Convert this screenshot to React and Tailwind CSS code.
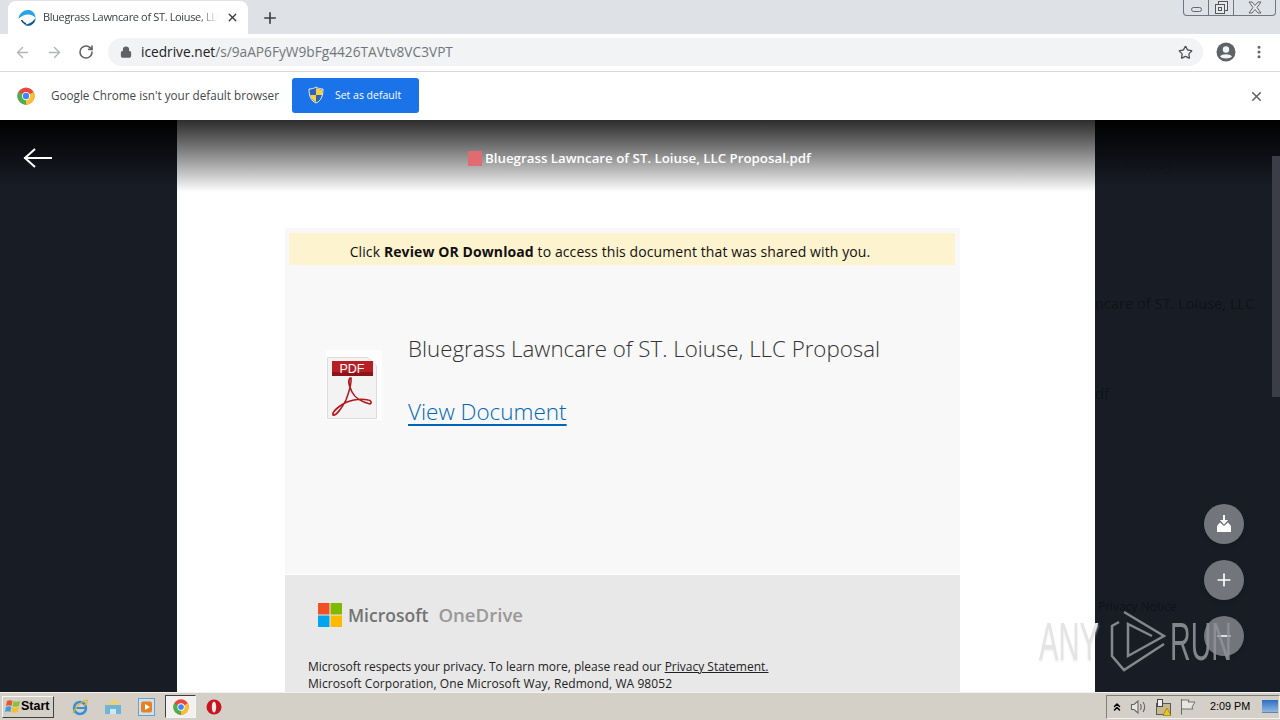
import React from "react";
import { ArrowLeft, ArrowRight, RotateCw, Lock, Star, MoreVertical, X, Plus, Minus, ChevronsUp } from "lucide-react";

const ChromeLogo = ({ size = 18 }) => (
  <svg width={size} height={size} viewBox="0 0 48 48">
    <circle cx="24" cy="24" r="23" fill="#e8453c" />
    <path d="M24 24 L44 13 A23 23 0 0 1 24 47 Z" fill="#fbc02d" />
    <path d="M24 24 L24 47 A23 23 0 0 1 4 13 Z" fill="#4caf50" />
    <circle cx="24" cy="24" r="11" fill="#fff" />
    <circle cx="24" cy="24" r="8.5" fill="#4285f4" />
  </svg>
);

const TabFavicon = () => (
  <svg width="18" height="18" viewBox="0 0 18 18" fill="none">
    <path d="M0.5 10 C1 4 6 0.5 11 1 C15 1.500 17.500 5 17.500 9 C15.500 6.500 12.500 5 9 5.500 C5.500 6 3 7.500 0.500 10Z" fill="#29a4e6" />
    <path d="M17.500 9 C17.800 13 14.500 17 9.500 16.800 C8 16.700 7 16.200 6 15.500 C10 15.800 14.500 13.500 17.500 9Z" fill="#0f5c9e" />
    <path d="M3.500 11 C4.500 13 6 14.500 8 15" stroke="#0d3f70" strokeWidth="1.600" />
  </svg>
);

const Shield = () => (
  <svg width="16" height="18" viewBox="0 0 16 18">
    <path d="M8 1 C10 2.500 13 3 15 3 C15 10 13 15 8 17 C3 15 1 10 1 3 C3 3 6 2.500 8 1Z" fill="#2f62b8" stroke="#e8eef8" strokeWidth="1" />
    <path d="M8 2 L8 9 L14 9 C14.300 7.500 14.400 5.500 14.400 3.600 C12 3.400 10 3 8 2Z" fill="#f7d23e" />
    <path d="M8 9 L2.200 9 C3 12.500 5 15 8 16.200Z" fill="#f7d23e" />
  </svg>
);

const PdfIcon = () => (
  <svg width="56" height="70" viewBox="0 0 56 70">
    <rect x="0" y="0" width="56" height="70" fill="#fdfdfd" />
    <path d="M1.500 7.500 H42 L50.500 16 V68.500 H1.500Z" fill="#f3f3f3" stroke="#dcdcdc" />
    <path d="M6 11 H47 V26 H6Z" fill="#b81f24" />
    <path d="M6 22 H47 V26 H6Z" fill="#8f1418" />
    <text x="26" y="23" textAnchor="middle" fontSize="12.500" fill="#fff" fontFamily="'Liberation Sans', sans-serif">PDF</text>
    <path d="M24 28 C22 30 23 36 26 42 C29 48 36 52 44 54 C46 53 45 50 42 50 C34 48 22 50 14 56 C10 59 6 62 7 65 C10 66 16 58 20 50 C23 42 26 34 25 28Z" fill="none" stroke="#b3181d" strokeWidth="1.600" />
  </svg>
);

const MsLogo = () => (
  <svg width="24" height="24" viewBox="0 0 24 24">
    <rect x="0" y="0" width="11.500" height="11.500" fill="#f25022" />
    <rect x="12.500" y="0" width="11.500" height="11.500" fill="#7fba00" />
    <rect x="0" y="12.500" width="11.500" height="11.500" fill="#00a4ef" />
    <rect x="12.500" y="12.500" width="11.500" height="11.500" fill="#ffb900" />
  </svg>
);

const StartOrb = () => (
  <svg width="18" height="18" viewBox="0 0 18 18">
    <path d="M3 3 C5 2 7 2 8.500 3 L7.500 8 C6 7 4 7 2 8Z" fill="#e8562a" />
    <path d="M9.500 3 C11 4 13 4 16 3 L15 8 C12.500 9 10 9 8.500 8Z" fill="#8cbf3f" />
    <path d="M2 9 C4 8 6 8 7.300 9 L6.300 14 C5 13 3 13 1 14Z" fill="#3f9be0" />
    <path d="M8.300 9 C10 10 12 10 14.800 9 L13.800 14 C11 15 9 15 7.300 14Z" fill="#f5c02c" />
  </svg>
);

const IeIcon = () => (
  <svg width="18" height="18" viewBox="0 0 18 18" fill="none">
    <circle cx="9" cy="10" r="6" stroke="#3b8fd6" strokeWidth="2.500" />
    <path d="M3 10 H15" stroke="#3b8fd6" strokeWidth="2" />
    <path d="M2 15 C5 8 11 3 16 2 C17 5 14 7 13 8" stroke="#e6b422" strokeWidth="1.200" />
  </svg>
);

const FolderIcon = () => (
  <svg width="18" height="18" viewBox="0 0 18 18">
    <path d="M2 5 H7 L8 2 H15 V7 H2Z" fill="#e9d17c" />
    <path d="M1 7 H17 V16 H12 V11 H6 V16 H1Z" fill="#6fb5d8" />
    <rect x="6" y="11" width="6" height="5" fill="#d3e5ee" />
  </svg>
);

const MediaIcon = () => (
  <svg width="17" height="18" viewBox="0 0 17 18">
    <rect x="0.500" y="0.500" width="16" height="17" fill="#cfe0ef" stroke="#6f9fc8" />
    <rect x="3" y="3.500" width="11" height="11" rx="2" fill="#e8811f" />
    <path d="M7 6 L12 9 L7 12Z" fill="#fff" />
  </svg>
);

const OperaIcon = () => (
  <svg width="16" height="16" viewBox="0 0 16 16">
    <circle cx="8" cy="8" r="7.500" fill="#c8141c" />
    <ellipse cx="8" cy="8" rx="2.200" ry="5.500" fill="#f4e9e6" />
  </svg>
);

const GhostText = ({ className, children }) => (
  <div className={`whitespace-nowrap text-[#10131a] blur-[0.5px] ${className}`}>{children}</div>
);

const Fab = ({ children }) => (
  <div className="flex h-10 w-10 items-center justify-center rounded-full bg-[#72757c] text-white shadow-md">{children}</div>
);

export default function App() {
  return (
    <div className="relative flex h-[720px] w-[1280px] flex-col overflow-hidden bg-white font-['Open_Sans','Noto_Sans',sans-serif]">
      {/* tab strip */}
      <div className="flex h-[34px] items-end justify-between bg-[#dee1e6] pl-2 pr-1">
        <div className="flex items-center">
          <div className="flex h-[33px] w-[240px] items-center rounded-t-lg bg-white pl-[10px] pr-[9px]">
            <TabFavicon />
            <span className="ml-[7px] w-[176px] overflow-hidden whitespace-nowrap text-[11px] tracking-[-0.35px] text-[#3c4043] [mask-image:linear-gradient(to_right,black_88%,transparent)]">Bluegrass Lawncare of ST. Loiuse, LLC Proposal</span>
            <X size={13} strokeWidth={2.500} className="ml-auto text-[#3c4043]" />
          </div>
          <Plus size={18} strokeWidth={2.200} className="ml-[13px] text-[#3c4043]" />
        </div>
        <div className="mb-[18px] flex h-[16px] w-[93px] self-start rounded-b border border-t-0 border-[#6e7680] text-[#5a5f66]">
          <div className="flex w-[25px] items-center justify-center border-r border-[#6e7680]"><div className="mt-1 h-[5px] w-[11px] rounded-sm border border-[#666]" /></div>
          <div className="flex w-[25px] items-center justify-center border-r border-[#6e7680]">
            <svg width="13" height="14" viewBox="0 0 13 14" fill="#e6e8eb" stroke="#555">
              <rect x="3.500" y="0.500" width="9" height="9" />
              <rect x="0.500" y="3.500" width="9" height="9" />
              <rect x="3.500" y="6.500" width="3" height="3" />
            </svg>
          </div>
          <div className="flex flex-1 items-center justify-center">
            <svg width="14" height="13" viewBox="0 0 14 13" fill="#e6e8eb" stroke="#666">
              <path d="M1 1 H4 L7 4.500 L10 1 H13 L9 6.500 L13 12 H10 L7 8.500 L4 12 H1 L5 6.500Z" />
            </svg>
          </div>
        </div>
      </div>

      {/* toolbar */}
      <div className="flex h-[38px] items-center border-b border-[#d9dadc] bg-white pb-[1px] pl-[14px] pr-[13px]">
        <ArrowLeft size={17} strokeWidth={2} className="text-[#b2b5b9]" />
        <ArrowRight size={17} strokeWidth={2} className="ml-[15px] text-[#b2b5b9]" />
        <RotateCw size={16} strokeWidth={2.400} className="ml-[15px] text-[#5f6368]" />
        <div className="ml-[14px] flex h-[28px] w-[1095px] items-center rounded-full bg-[#f1f3f4] pl-3 pr-[10px]">
          <Lock size={12} strokeWidth={2.500} fill="#5f6368" className="text-[#5f6368]" />
          <span className="ml-[9px] whitespace-nowrap text-[13.700px] leading-[20px] text-[#202124]">icedrive.net<span className="text-[#72767b]">/s/9aAP6FyW9bFg4426TAVtv8VC3VPT</span></span>
          <Star size={15} strokeWidth={2} className="ml-auto text-[#4a4d52]" />
        </div>
        <svg width="20" height="20" viewBox="0 0 20 20" className="ml-[13px]">
          <circle cx="10" cy="10" r="9.500" fill="#5f6368" />
          <circle cx="10" cy="7.500" r="3.200" fill="#f1f3f4" />
          <path d="M4 14.500 C6 11.500 14 11.500 16 14.500 C14 17 6 17 4 14.500Z" fill="#f1f3f4" />
        </svg>
        <MoreVertical size={16} strokeWidth={2.500} className="ml-[15px] text-[#5f6368]" />
      </div>

      {/* default browser bar */}
      <div className="flex h-[48px] items-center bg-white pl-[17px] pr-[16px]">
        <ChromeLogo size={18} />
        <span className="ml-[16px] whitespace-nowrap text-[11.700px] text-[#44474b]">Google Chrome isn't your default browser</span>
        <div className="ml-[13px] flex h-[35px] w-[127px] -translate-y-[1px] items-center rounded-[3px] bg-[#1a73e8] pl-[16px] text-white">
          <Shield />
          <span className="ml-[11px] whitespace-nowrap pt-[2px] text-[10.500px]">Set as default</span>
        </div>
        <X size={15} strokeWidth={2.500} className="ml-auto text-[#62666b]" />
      </div>

      {/* page */}
      <div className="relative flex flex-1 overflow-hidden bg-[#181c25]">
        <div className="w-[177px] shrink-0" />
        <div className="w-[918px] shrink-0 bg-white pl-[108px] pt-[108px]">
          <div className="w-[675px]">
            <div className="bg-[#f8f8f8] pb-[144px] pl-1 pr-[5px] pt-[5px]">
              <div className="flex h-[32px] items-center justify-center bg-[#fdf3cf] pr-[24px] pt-[5px] text-[14px] tracking-[0.1px] text-[#111]">
                <span>Click <b className="font-bold">Review OR Download</b> to access this document that was shared with you.</span>
              </div>
              <div className="flex pl-[37px] pt-[65px]">
                <div className="mt-[20px]"><PdfIcon /></div>
                <div className="ml-[26px] text-[22.300px] font-light">
                  <div className="mt-px whitespace-nowrap leading-[36px] text-[#333]">Bluegrass Lawncare of ST. Loiuse, LLC Proposal</div>
                  <a className="mt-[27px] block text-[22.500px] leading-[36px] text-[#0067b8] underline underline-offset-4">View Document</a>
                </div>
              </div>
            </div>
            <div className="mt-px bg-[#e8e8e8] pl-[23px] pt-[26px]">
              <div className="flex items-center pl-[10px]">
                <MsLogo />
                <span className="ml-[6px] text-[17.500px] font-semibold text-[#737373]">Microsoft</span>
                <span className="ml-[10px] text-[18.600px] font-semibold text-[#999]">OneDrive</span>
              </div>
              <div className="mt-[29px] text-[12px] leading-[17px] text-[#222]">
                <div className="whitespace-nowrap">Microsoft respects your privacy. To learn more, please read our <span className="underline">Privacy Statement.</span></div>
                <div className="whitespace-nowrap tracking-[0.08px]">Microsoft Corporation, One Microsoft Way, Redmond, WA 98052</div>
              </div>
            </div>
          </div>
        </div>

        {/* top fade over the page */}
        <div className="absolute inset-x-0 top-0 h-[65px] bg-gradient-to-b from-black to-[#181c25]/0" />
        <div className="absolute left-[177px] top-0 h-[72px] w-[918px] bg-gradient-to-b from-[#2d2d2d] to-white" />
        <svg width="30" height="20" viewBox="0 0 30 20" fill="none" stroke="#fff" strokeWidth="2" className="absolute left-[23px] top-[28px]">
          <path d="M1 10 H29" />
          <path d="M12 1 L2 10 L12 19" />
        </svg>
        <div className="absolute left-[468px] top-[29px] flex items-center gap-[3px]">
          <div className="h-[15px] w-[14px] bg-[#e06c72]" />
          <span className="whitespace-nowrap text-[13.300px] font-semibold text-white">Bluegrass Lawncare of ST. Loiuse, LLC Proposal.pdf</span>
        </div>

        {/* dimmed page behind the viewer */}
        <GhostText className="absolute left-[1095px] top-[33px] text-[15px]">on Delivery</GhostText>
        <GhostText className="absolute left-[1095px] top-[173px] text-[14.600px]">ncare of ST. Loiuse, LLC</GhostText>
        <GhostText className="absolute left-[1095px] top-[262px] text-[15px]">df</GhostText>
        <GhostText className="absolute left-[1098px] top-[478px] text-[12px]">Privacy Notice</GhostText>

        {/* scrollbar */}
        <div className="absolute right-0 top-[36px] h-[241px] w-2 bg-[#3b3e47]" />

        {/* zoom buttons */}
        <div className="absolute left-[1204px] top-[384px] flex flex-col gap-4">
          <Fab>
            <svg width="16" height="18" viewBox="0 0 16 18" fill="#fff">
              <path d="M7 0 H9 V5 H12 L8 9.500 L4 5 H7Z" />
              <path d="M1 17 V11 L4 7.500 L8 11 L12 7.500 L15 11 V17Z" />
            </svg>
          </Fab>
          <Fab><Plus size={20} strokeWidth={2} /></Fab>
          <Fab><Minus size={20} strokeWidth={2} /></Fab>
        </div>

        {/* watermark */}
        <span className="absolute left-[1039px] top-[495px] origin-left scale-x-[0.55] font-['Liberation_Sans',sans-serif] text-[53px] leading-none text-[#e4e4e4] [text-shadow:0_2px_3px_#eeeeee]">ANY</span>
        <svg width="56" height="62" viewBox="0 0 56 62" fill="none" stroke="#85878c" strokeWidth="2.500" className="absolute left-[1110px] top-[490px]">
          <path d="M14 2 L54 26 L18 46 V14 L42 26" />
          <path d="M9 12 L2 16 V46 L14 60 L54 34" />
        </svg>
        <span className="absolute left-[1170px] top-[495px] origin-left scale-x-[0.54] font-['Liberation_Sans',sans-serif] text-[53px] leading-none text-[#8f9196]/90">RUN</span>
      </div>

      {/* taskbar */}
      <div className="flex h-[28px] items-center border-t border-[#f4f2ee] bg-[#d4d0c8] pl-[2px] text-black">
        <div className="flex h-[22px] w-[52px] items-center border border-[#f5f5f5] border-b-[#404040] border-r-[#404040] pl-[1px] font-['Liberation_Sans',sans-serif] text-[12.500px] font-bold">
          <StartOrb />
          <span className="-ml-[1px]">Start</span>
        </div>
        <div className="ml-[17px]"><IeIcon /></div>
        <div className="ml-[15px]"><FolderIcon /></div>
        <div className="ml-[16px]"><MediaIcon /></div>
        <div className="ml-[10px] flex h-[23px] w-[31px] items-center justify-center border border-[#f5f5f5] border-l-[#404040] border-t-[#404040] bg-[#f3f1ed]"><ChromeLogo size={16} /></div>
        <div className="ml-[10px]"><OperaIcon /></div>
        <div className="ml-auto flex h-[24px] w-[174px] items-center border border-[#f3f1ec] border-l-[#7f7f7f] border-t-[#7f7f7f] pl-[4px]">
          <ChevronsUp size={12} strokeWidth={3} />
          <svg width="18" height="16" viewBox="0 0 18 16" fill="none" stroke="#666" strokeWidth="1.100" className="ml-[7px]">
            <path d="M1.500 5.500 H4 L8 2 V14 L4 10.500 H1.500Z" fill="#e8e6e0" />
            <path d="M10.500 5 C11.500 7 11.500 9 10.500 11" />
            <path d="M13 3 C15 6 15 10 13 13" />
          </svg>
          <svg width="18" height="18" viewBox="0 0 18 18" className="ml-[6px]">
            <rect x="2.500" y="5.500" width="14" height="11" fill="#c6b98f" stroke="#5a5a5a" />
            <rect x="3.500" y="1.500" width="5" height="7" fill="#eeeeee" stroke="#444" />
            <path d="M9 17.500 L13 10 L17 17.500Z" fill="#f0c419" stroke="#8a6d00" strokeWidth="0.600" />
          </svg>
          <svg width="16" height="17" viewBox="0 0 16 17" fill="#e8e6e0" stroke="#666" className="ml-[8px]">
            <path d="M1.500 1 V16.500" />
            <path d="M1.500 2 H9 L8 4 H15 L12 9 L13 11 H1.500Z" strokeWidth="0.900" />
          </svg>
          <span className="ml-[14px] whitespace-nowrap font-['Liberation_Sans',sans-serif] text-[10.800px]">2:09 PM</span>
          <div className="ml-[12px] h-[13px] w-[16px] border-b border-[#5f86b3] bg-gradient-to-b from-[#2a6fc0] to-[#8fb7e0]" />
        </div>
      </div>
    </div>
  );
}
